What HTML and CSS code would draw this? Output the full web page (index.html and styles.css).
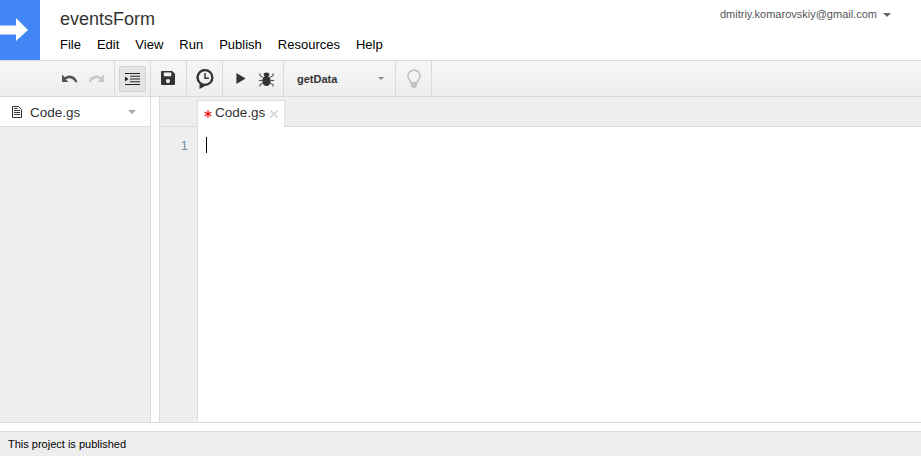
FILE: index.html
```html
<!DOCTYPE html>
<html lang="en">
<head>
<meta charset="utf-8">
<title>eventsForm</title>
<link rel="stylesheet" href="styles.css">
</head>
<body>
<div class="app">
  <header class="header">
    <div class="logo">
      <svg width="40" height="60" viewBox="0 0 40 60"><path fill="#fff" d="M0 25.500H16V18L28 30 16 41V34.500H0Z"/></svg>
    </div>
    <div class="titles">
      <div class="project">eventsForm</div>
      <nav class="menu">
        <span>File</span><span>Edit</span><span>View</span><span>Run</span><span>Publish</span><span>Resources</span><span>Help</span>
      </nav>
    </div>
    <div class="account">dmitriy.komarovskiy@gmail.com<i class="caret caret-account"></i></div>
  </header>

  <div class="toolbar">
    <div class="tb tb-undo">
      <svg width="16" height="10" viewBox="0 0 16 10"><path fill="#555" d="M0 0.500V8H6.500L4 5.500C6.500 3.500 10.500 3.500 13.500 8.500L15.500 8C13 1.500 7.500 0 2.800 3.300Z"/></svg>
      <svg width="16" height="10" viewBox="0 0 16 10"><path fill="#c8c8c8" d="M16 0.500V8H9.500L12 5.500C9.500 3.500 5.500 3.500 2.500 8.500L0.500 8C3 1.500 8.500 0 13.200 3.300Z"/></svg>
    </div>
    <div class="tb tb-std">
      <div class="pressed">
        <svg width="15" height="12" viewBox="0 0 15 12"><path fill="#222" d="M0 0H15V1H0ZM5 2.800H15V3.800H5ZM5 5.500H15V6.500H5ZM5 8.200H15V9.200H5ZM0 11H15V12H0ZM0 3.500L3.500 6 0 8.500Z"/></svg>
      </div>
    </div>
    <div class="tb tb-std">
      <svg class="save" width="14" height="14" viewBox="0 0 15 15"><path fill="#333" fill-rule="evenodd" d="M1 0H12L15 3V14A1 1 0 0 1 14 15H1A1 1 0 0 1 0 14V1A1 1 0 0 1 1 0ZM3 1.500V5.500H11V1.500ZM7.500 8.500A2.200 2.200 0 1 0 7.500 13 2.200 2.200 0 0 0 7.500 8.500Z"/></svg>
    </div>
    <div class="tb tb-std">
      <svg width="18" height="20" viewBox="0 0 18 20"><path fill="#333" fill-rule="evenodd" d="M9 0A8.500 8.500 0 0 1 9 17L3.500 20V15A8.500 8.500 0 0 1 9 0ZM9 2.300A6.200 6.200 0 1 0 9 14.700 6.200 6.200 0 0 0 9 2.300Z"/><path fill="#333" d="M8.300 4H9.800V8.500H13V10H8.300Z"/></svg>
    </div>
    <div class="tb tb-run">
      <svg width="10" height="11" viewBox="0 0 10 12"><path fill="#333" d="M0 0L10 6 0 12Z"/></svg>
      <svg width="15" height="16" viewBox="0 0 16 16"><g fill="#333"><ellipse cx="8" cy="10" rx="4.500" ry="5.500"/><ellipse cx="8" cy="3.300" rx="3" ry="2.300"/></g><path stroke="#333" stroke-width="1" fill="none" d="M4 6L1 4.500V2M12 6L15 4.500V2M3.500 9.500H0M12.500 9.500H16M4 12.500L1 14V16M12 12.500L15 14V16"/></svg>
    </div>
    <div class="tb tb-select">
      <span>getData</span><i class="caret caret-select"></i>
    </div>
    <div class="tb tb-std">
      <svg width="14" height="21" viewBox="0 0 16 21"><path fill="none" stroke="#c0c0c0" stroke-width="1.800" d="M8 0.900A7 7 0 0 1 15 7.900C15 11 12 12.500 11.500 15.500H4.500C4 12.500 1 11 1 7.900A7 7 0 0 1 8 0.900Z"/><path fill="#c0c0c0" d="M4.500 16.500H11.500V19L10 21H6L4.500 19Z"/></svg>
    </div>
  </div>

  <main class="workspace">
    <aside class="sidebar">
      <div class="file">
        <svg width="10" height="12" viewBox="0 0 10 12"><path fill="none" stroke="#333" d="M0.500 0.500H6.500L9.500 3.500V11.500H0.500Z"/><path stroke="#333" d="M2 4.500H8M2 6.500H8M2 8.500H8M2 2.500H5.500"/></svg>
        <span class="file-name">Code.gs</span>
        <i class="caret caret-file"></i>
      </div>
    </aside>
    <div class="splitter"></div>
    <section class="editor">
      <div class="tabs">
        <div class="tab">
          <svg class="star" width="8" height="8" viewBox="0 0 8 9"><path stroke="#e00" stroke-width="1.200" d="M4 0V9M0.300 2.200L7.700 6.800M7.700 2.200L0.300 6.800"/></svg>
          <span>Code.gs</span>
          <svg class="close" width="8" height="8" viewBox="0 0 8 8"><path stroke="#dcdcdc" stroke-width="2" d="M0.500 0.500L7.500 7.500M7.500 0.500L0.500 7.500"/></svg>
        </div>
      </div>
      <div class="code">
        <div class="gutter">1</div>
        <div class="text"><div class="cursor"></div></div>
      </div>
    </section>
  </main>

  <div class="spacer"></div>
  <footer class="status">This project is published</footer>
</div>
</body>
</html>
```

FILE: styles.css
```css
* { box-sizing: border-box; }
html, body { margin: 0; height: 100%; overflow: hidden; }
body { font-family: "Liberation Sans", Arial, sans-serif; color: #000; background: #fff; }
.app { display: flex; flex-direction: column; height: 456px; }

.header { display: flex; height: 60px; flex: none; }
.logo { width: 40px; height: 60px; background: #4285f4; flex: none; }
.logo svg { display: block; }
.titles { margin-left: 20px; flex: 1; }
.project { font-size: 18px; line-height: 21px; margin-top: 9px; color: #333; }
.menu { display: flex; gap: 16px; margin-top: 7px; font-size: 13px; line-height: 15px; color: #000; }
.account { font-size: 11px; line-height: 13px; color: #555; padding-top: 8px; margin-right: 30px; white-space: nowrap; }

.caret { display: inline-block; width: 0; height: 0; border-style: solid; border-color: transparent; border-bottom-width: 0; }
.caret-account { border-width: 4px 4px 0; border-top-color: #666; margin-left: 6px; vertical-align: 1px; }
.caret-select { border-width: 3px 3px 0; border-top-color: #888; }
.caret-file { border-width: 4px 4px 0; border-top-color: #aaa; margin-left: auto; margin-right: 14px; }

.toolbar {
  display: flex; height: 37px; flex: none;
  border-top: 1px solid #d9d9d9; border-bottom: 1px solid #d9d9d9;
  background: linear-gradient(#f6f6f6, #eeeeee);
}
.tb { display: flex; align-items: center; justify-content: center; height: 100%; border-right: 1px solid #dadada; flex: none; }
.tb-undo { width: 115px; gap: 10px; padding-left: 62px; justify-content: flex-start; padding-top: 1px; }
.tb-std { width: 36px; }
.tb-run { width: 61px; gap: 13px; padding-left: 13px; justify-content: flex-start; }
.tb-select { width: 112px; padding: 0 11px 0 13px; justify-content: space-between; font-size: 11px; font-weight: bold; color: #333; }
.pressed {
  width: 27px; height: 26px; display: flex; align-items: center; justify-content: center;
  background: #e4e4e4; border: 1px solid #d4d4d4; border-radius: 2px;
}
.tb svg { display: block; flex: none; }
.tb .save { margin-right: 1px; margin-bottom: 1px; }

.workspace { display: flex; flex: 1; min-height: 0; }
.sidebar { width: 151px; flex: none; background: #eee; border-right: 1px solid #dcdcdc; }
.file { display: flex; align-items: center; height: 30px; background: #fff; border-bottom: 1px solid #e0e0e0; padding-left: 12px; font-size: 13.500px; color: #333; }
.file-name { margin-left: 8px; padding-top: 1px; }
.splitter { width: 9px; flex: none; background: #fff; border-right: 1px solid #dcdcdc; }
.editor { flex: 1; display: flex; flex-direction: column; min-width: 0; }
.tabs { height: 30px; flex: none; background: #eee; border-bottom: 1px solid #dcdcdc; padding: 3px 0 0 37px; }
.tab {
  display: flex; align-items: center; width: 88px; height: 27px;
  background: #fff; border: 1px solid #e0e0e0; border-bottom: 0; font-size: 13.500px; color: #333;
  padding-left: 6px; padding-bottom: 3px;
}
.star { margin-right: 3px; margin-top: 3px; flex: none; }
.close { margin-left: 5px; margin-top: 2px; flex: none; }
.code { flex: 1; display: flex; min-height: 0; }
.gutter { width: 38px; flex: none; background: #eee; border-right: 1px solid #dcdcdc; padding: 11px 9px 0 0; text-align: right; font-size: 13px; line-height: 15px; color: #7a8fa6; }
.text { flex: 1; padding: 10px 0 0 8px; }
.cursor { width: 1px; height: 16px; background: #000; }

.spacer { height: 9px; flex: none; border-top: 1px solid #dcdcdc; }
.status { height: 25px; flex: none; background: #eee; border-top: 1px solid #dcdcdc; padding: 5px 0 0 8px; font-size: 11px; line-height: 14px; color: #000; }
```
